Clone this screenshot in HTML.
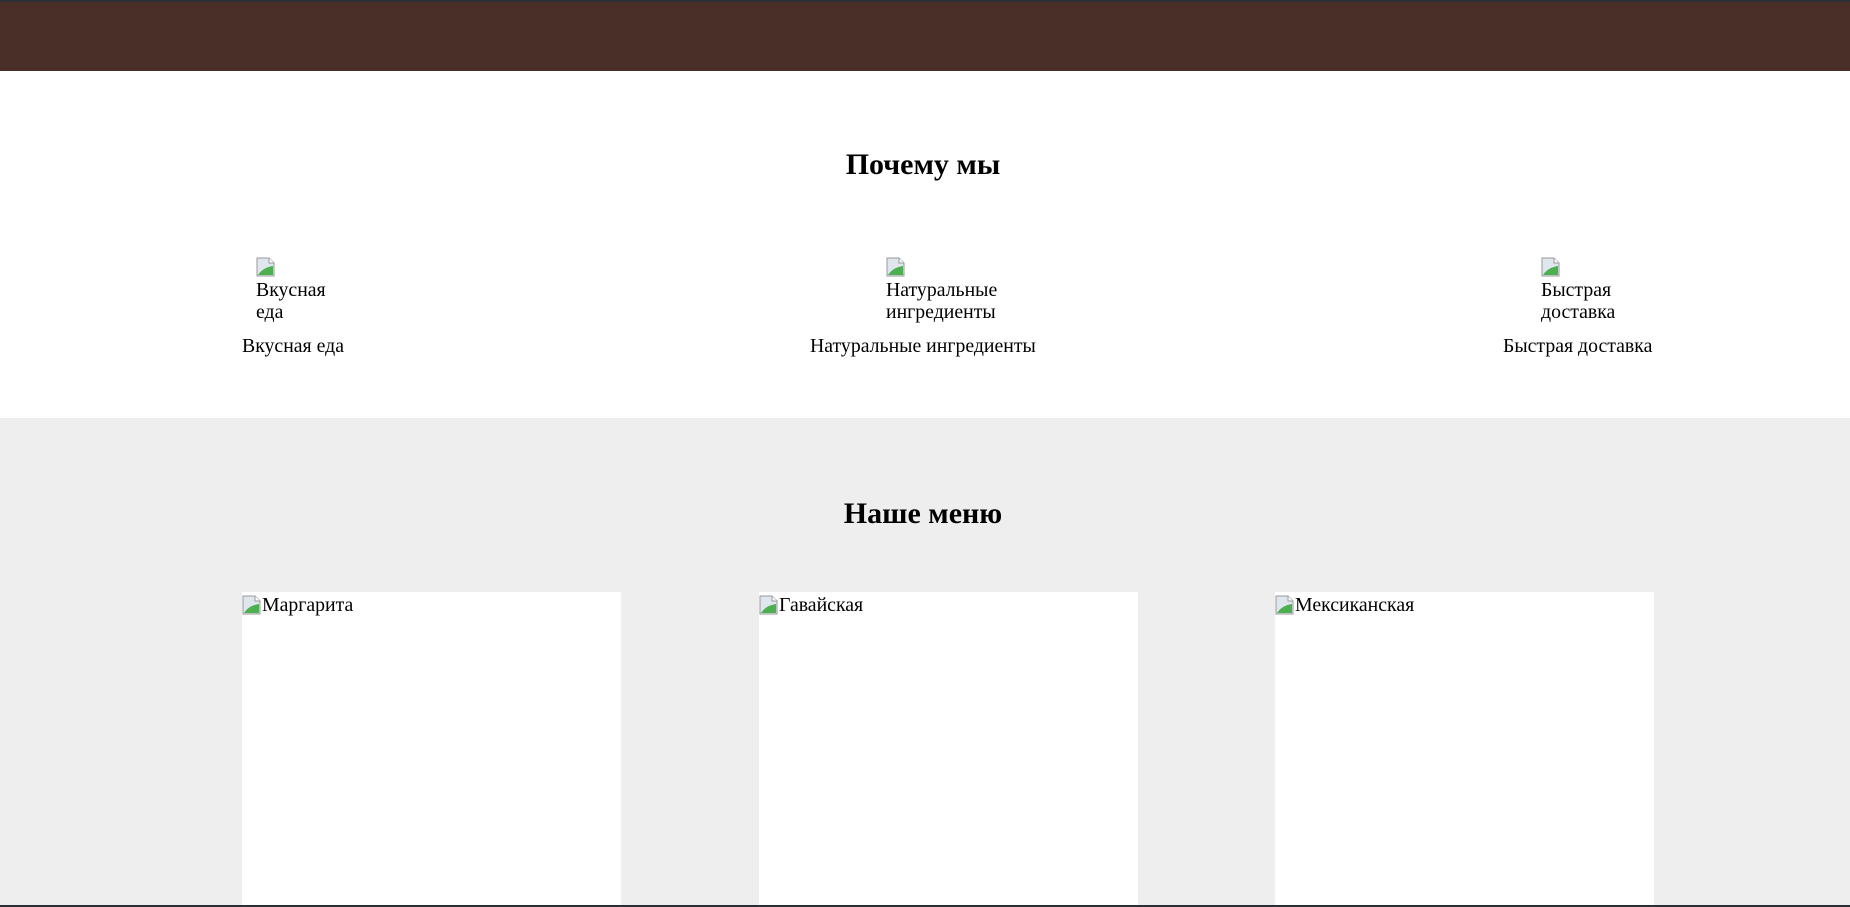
<!DOCTYPE html>
<html><head><meta charset="utf-8"><style>
html,body{margin:0;padding:0;width:1850px;height:907px;overflow:hidden;font-family:"Liberation Serif",serif;color:#000;font-size:19.8px}
.top{position:absolute;left:0;top:0;width:1850px;height:2px;background:#2b2e33}
.hdr{position:absolute;left:0;top:2px;width:1850px;height:69px;background:#4a2f28}
.wh{position:absolute;left:0;top:71px;width:1848px;height:347px;background:#fff}
.gr{position:absolute;left:0;top:418px;width:1850px;height:487px;background:#eee}
.bot{position:absolute;left:0;top:905px;width:1850px;height:2px;background:#2b2e33}
h2{position:absolute;margin:0;font-size:30px;font-weight:bold;line-height:34px;width:1846px;text-align:center;left:0}
.ab{position:absolute;line-height:22px;white-space:nowrap}
.ic{position:absolute;width:20px;height:20px}
.card{position:absolute;top:592px;width:379px;height:313px;background:#fff}
.card span{position:absolute;left:20px;top:2px;line-height:22px}
.card svg{position:absolute;left:0;top:3px}
</style></head><body>
<div class="top"></div><div class="hdr"></div><div class="wh"></div><div class="gr"></div>
<h2 style="top:148px">Почему мы</h2>
<svg width="0" height="0" style="position:absolute"><defs><g id="bi"><path d="M1 1h12l5 5v13H1z" fill="#dfe6ee" stroke="#999"/><path d="M2 18c4-6 9-8 15-9v9z" fill="#4caf50"/><path d="M13 1v5h5" fill="#fff" stroke="#999"/></g></defs></svg>
<svg class="ic" style="left:256px;top:257px" viewBox="0 0 20 20"><use href="#bi"/></svg>
<div class="ab" style="left:256px;top:279px">Вкусная<br>еда</div>
<div class="ab" style="left:242px;top:335px">Вкусная еда</div>
<svg class="ic" style="left:886px;top:257px" viewBox="0 0 20 20"><use href="#bi"/></svg>
<div class="ab" style="left:886px;top:279px">Натуральные<br>ингредиенты</div>
<div class="ab" style="left:810px;top:335px">Натуральные ингредиенты</div>
<svg class="ic" style="left:1541px;top:257px" viewBox="0 0 20 20"><use href="#bi"/></svg>
<div class="ab" style="left:1541px;top:279px">Быстрая<br>доставка</div>
<div class="ab" style="left:1503px;top:335px">Быстрая доставка</div>
<h2 style="top:497px">Наше меню</h2>
<div class="card" style="left:242px"><svg width="20" height="20" viewBox="0 0 20 20"><use href="#bi"/></svg><span>Маргарита</span></div>
<div class="card" style="left:759px"><svg width="20" height="20" viewBox="0 0 20 20"><use href="#bi"/></svg><span>Гавайская</span></div>
<div class="card" style="left:1275px"><svg width="20" height="20" viewBox="0 0 20 20"><use href="#bi"/></svg><span>Мексиканская</span></div>
<div class="bot"></div>
</body></html>
